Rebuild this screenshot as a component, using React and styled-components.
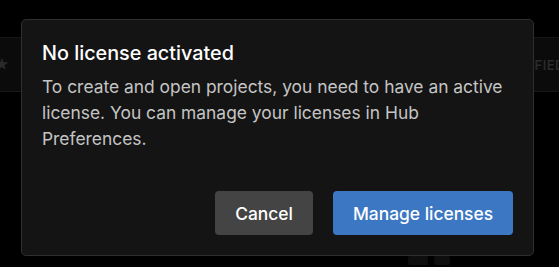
import React from "react";
import styled, { createGlobalStyle } from "styled-components";

const GlobalStyle = createGlobalStyle`
  html, body {
    margin: 0;
    padding: 0;
    background: #000;
    overflow: hidden;
  }
  body {
    font-family: Inter, "Noto Sans", Roboto, sans-serif;
  }
`;

const Page = styled.div`
  position: relative;
  width: 559px;
  height: 267px;
  background: #000;
  overflow: hidden;
`;

/* the hub window behind the modal */
const Backdrop = styled.div`
  display: flex;
  flex-direction: column;
  padding-top: 37px;
  height: 100%;
  box-sizing: border-box;
`;

const Band = styled.div`
  height: 53px;
  background: #0b0b0b;
  border-top: 1px solid #141414;
  border-bottom: 1px solid #181818;
  display: flex;
  align-items: center;
  justify-content: space-between;
  color: #2c2c2c;
`;

const Star = styled.span`
  font-size: 15px;
  margin-left: -6px;
  color: #2a2a2a;
`;

const Tag = styled.span`
  font-size: 13px;
  font-weight: 600;
  letter-spacing: 0.5px;
  margin-right: -6px;
  color: #2a2a2a;
`;

const Footer = styled.div`
  margin-top: auto;
  display: flex;
  gap: 6px;
  padding-left: 408px;
  padding-bottom: 2px;
`;

const Chip = styled.div`
  width: ${(p) => p.w}px;
  height: 9px;
  background: #0e0e0e;
  border-radius: 2px;
`;

const Modal = styled.div`
  position: absolute;
  left: 21px;
  top: 19px;
  width: 513px;
  height: 237px;
  box-sizing: border-box;
  background: #141414;
  border: 1px solid #2e2e2e;
  border-radius: 5px;
  padding: 19px 20px 20px 20px;
  display: flex;
  flex-direction: column;
`;

const Title = styled.h2`
  margin: 0;
  font-size: 19.8px;
  font-weight: 500;
  color: #fff;
  line-height: 28px;
`;

const Body = styled.p`
  margin: 7px 0 0;
  font-size: 17.4px;
  line-height: 26px;
  color: #c4c4c4;
`;

const Actions = styled.div`
  margin-top: auto;
  display: flex;
  justify-content: flex-end;
  gap: 20px;
`;

const Button = styled.button`
  height: 44px;
  width: ${(p) => p.w}px;
  border: none;
  border-radius: 4px;
  font-family: inherit;
  font-size: 17.4px;
  font-weight: 500;
  color: #fff;
  background: ${(p) => (p.primary ? "#3c77c4" : "#444444")};
  cursor: pointer;
`;

export default function App() {
  return (
    <>
      <GlobalStyle />
      <Page>
        <Backdrop>
          <Band>
            <Star>★</Star>
            <Tag>FIED</Tag>
          </Band>
          <Footer>
            <Chip w={20} />
            <Chip w={16} />
          </Footer>
        </Backdrop>
        <Modal>
          <Title>No license activated</Title>
          <Body>
            To create and open projects, you need to have an active license. You
            can manage your licenses in Hub Preferences.
          </Body>
          <Actions>
            <Button w={98}>Cancel</Button>
            <Button w={180} primary>
              Manage licenses
            </Button>
          </Actions>
        </Modal>
      </Page>
    </>
  );
}
